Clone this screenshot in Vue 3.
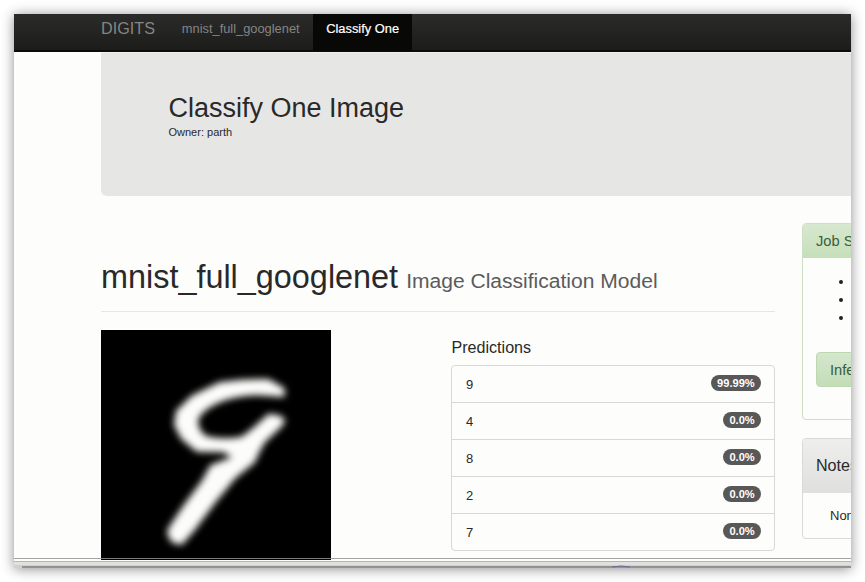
<script setup>
const predictions = [
  { label: '9', value: '99.99%' },
  { label: '4', value: '0.0%' },
  { label: '8', value: '0.0%' },
  { label: '2', value: '0.0%' },
  { label: '7', value: '0.0%' },
]
</script>

<template>
  <div class="page">
    <div class="window">
      <nav class="navbar">
        <a class="brand">DIGITS</a>
        <a class="nav-link">mnist_full_googlenet</a>
        <a class="nav-link active">Classify One</a>
      </nav>
      <header class="jumbotron">
        <h2>Classify One Image</h2>
        <p>Owner: parth</p>
      </header>
      <div class="columns">
        <main>
          <h1>mnist_full_googlenet <small>Image Classification Model</small></h1>
          <div class="result">
            <svg class="digit" viewBox="33 15 690 690">
              <defs>
                <filter id="soft" x="-20%" y="-20%" width="140%" height="140%">
                  <feGaussianBlur stdDeviation="11.5" />
                </filter>
              </defs>
              <rect x="33" y="15" width="690" height="690" fill="#000" />
              <path filter="url(#soft)" fill="#fcfcfa" d="M388 172 Q450 162 535 162 L584 190 L584 216 L500 211 Q430 213 380 236 Q335 258 324 285 Q324 318 350 334 Q400 345 455 335 L490 308 L536 266 L572 272 L586 286 L576 304 L525 352 Q505 385 495 412 L436 460 L378 530 L312 618 L275 660 L244 652 L230 622 L240 602 L280 542 L335 468 L362 420 L425 397 L400 382 L320 380 L274 342 L252 300 L258 258 L305 212 Z" />
            </svg>
            <section class="predictions">
              <h4>Predictions</h4>
              <ul>
                <li v-for="item in predictions" :key="item.label">
                  <span>{{ item.label }}</span>
                  <b>{{ item.value }}</b>
                </li>
              </ul>
            </section>
          </div>
        </main>
        <aside>
          <section class="panel job">
            <h4>Job Status</h4>
            <ul><li></li><li></li><li></li></ul>
            <div class="inference">Inference</div>
          </section>
          <section class="panel notes">
            <h4>Notes</h4>
            <p>None</p>
          </section>
        </aside>
      </div>
      <div class="bottom-edge">
        <svg width="837" height="10" viewBox="0 0 837 10">
          <rect width="837" height="1" fill="#929292" fill-opacity=".85" />
          <rect y="3" width="837" height="1" fill="#b5b5b5" />
          <rect y="4" width="837" height="4" fill="#e0e0df" />
          <rect y="7" width="837" height="3" fill="#d0d0cf" />
          <rect x="8" y="8" width="829" height="2" fill="#929291" />
          <path d="M598 9 Q607 7 616 9" fill="none" stroke="#6d6b98" />
        </svg>
      </div>
    </div>
  </div>
</template>

<style>
body {
  margin: 0;
  background: #fff;
}
</style>

<style scoped>
* {
  box-sizing: border-box;
}
.page {
  width: 865px;
  height: 582px;
  padding: 14px;
  overflow: hidden;
  background: #fff;
  font-family: "Liberation Sans", Arial, sans-serif;
  font-size: 13px;
  color: #292929;
}
.window {
  position: relative;
  width: 837px;
  height: 554px;
  overflow: hidden;
  background: #fdfdfc;
  box-shadow: 0 1px 12px rgba(0, 0, 0, .45);
}
h1, h2, h4, p, ul {
  margin: 0;
  padding: 0;
  font-weight: 400;
}
ul {
  list-style: none;
}
.navbar {
  display: flex;
  height: 38px;
  padding-left: 87px;
  border-bottom: 2px solid #0b0b0b;
  background: linear-gradient(#2b2b2a, #1c1c1b);
  color: #858583;
  line-height: 29px;
  white-space: nowrap;
}
.brand {
  width: 67.5px;
  font-size: 16.2px;
}
.nav-link {
  padding: 0 13.3px;
  font-size: 12.85px;
}
.active {
  height: 37px;
  background: #080807;
  color: #fff;
  -webkit-text-stroke: .2px #fff;
}
.jumbotron {
  height: 144px;
  margin-left: 87px;
  padding: 40px 67.5px 0;
  border-top: 1px solid #f0f0ef;
  border-radius: 0 0 0 6px;
  background: #e6e6e5;
}
.jumbotron h2 {
  font-size: 27px;
  line-height: 31px;
}
.jumbotron p {
  margin-top: 1px;
  font-size: 11px;
  line-height: 14px;
}
.columns {
  display: flex;
  padding: 27px 0 0 87px;
}
main {
  flex: 0 0 674px;
}
h1 {
  height: 89px;
  padding-top: 34px;
  border-bottom: 1px solid #e6e6e5;
  font-size: 32.4px;
  line-height: 40px;
  white-space: nowrap;
}
h1 small {
  margin-left: -1px;
  font-size: 21.05px;
  color: #5b5b5b;
}
.result {
  display: flex;
  justify-content: space-between;
  padding-top: 18px;
}
.digit {
  width: 230px;
  height: 230px;
}
.predictions {
  width: 324px;
  padding-top: 8px;
}
.predictions h4 {
  padding-left: .5px;
  font-size: 16.1px;
  line-height: 19px;
}
.predictions ul {
  margin-top: 8px;
  border: 1px solid #d8d8d7;
  border-radius: 4px;
}
.predictions li {
  display: flex;
  align-items: center;
  justify-content: space-between;
  height: 37px;
  padding: 0 13px 0 14px;
}
.predictions li:last-child {
  height: 36px;
}
.predictions li:not(:last-child) {
  border-bottom: 1px solid #d8d8d7;
}
.predictions b {
  height: 16px;
  margin-bottom: 2px;
  padding: 0 6.3px;
  border-radius: 9px;
  background: #585858;
  color: #fff;
  font-size: 11.1px;
  line-height: 17px;
}
aside {
  flex: 0 0 240px;
  margin-left: 27px;
}
.panel {
  border: 1px solid #d9d9d8;
  border-radius: 4px;
  overflow: hidden;
}
.job {
  height: 197px;
  border-color: #cfdfc5;
}
.job h4 {
  height: 34px;
  padding-left: 13px;
  background: linear-gradient(#d7e8d1, #c5dfb9);
  color: #38603a;
  font-size: 14.7px;
  line-height: 34px;
}
.job ul {
  padding: 15px 0 0 36px;
}
.job li {
  height: 18px;
}
.job li::before {
  content: "";
  display: block;
  width: 4px;
  height: 4px;
  border-radius: 50%;
  background: #222;
  transform: translateY(7px);
}
.inference {
  height: 35px;
  margin: 25px 13px 0;
  padding-left: 13px;
  border: 1px solid #bdd8af;
  border-radius: 4px;
  background: linear-gradient(#d5e7ce, #c3ddb7);
  color: #38603a;
  font-size: 14.7px;
  line-height: 34px;
}
.notes {
  height: 101px;
  margin-top: 18px;
}
.notes h4 {
  height: 54px;
  padding-left: 13px;
  background: linear-gradient(#eeeeed, #dfdfde);
  font-size: 16.1px;
  line-height: 52px;
}
.notes p {
  padding-left: 27px;
  line-height: 46px;
}
.bottom-edge {
  position: absolute;
  left: 0;
  bottom: 0;
  height: 10px;
}
.bottom-edge svg {
  display: block;
}
</style>
